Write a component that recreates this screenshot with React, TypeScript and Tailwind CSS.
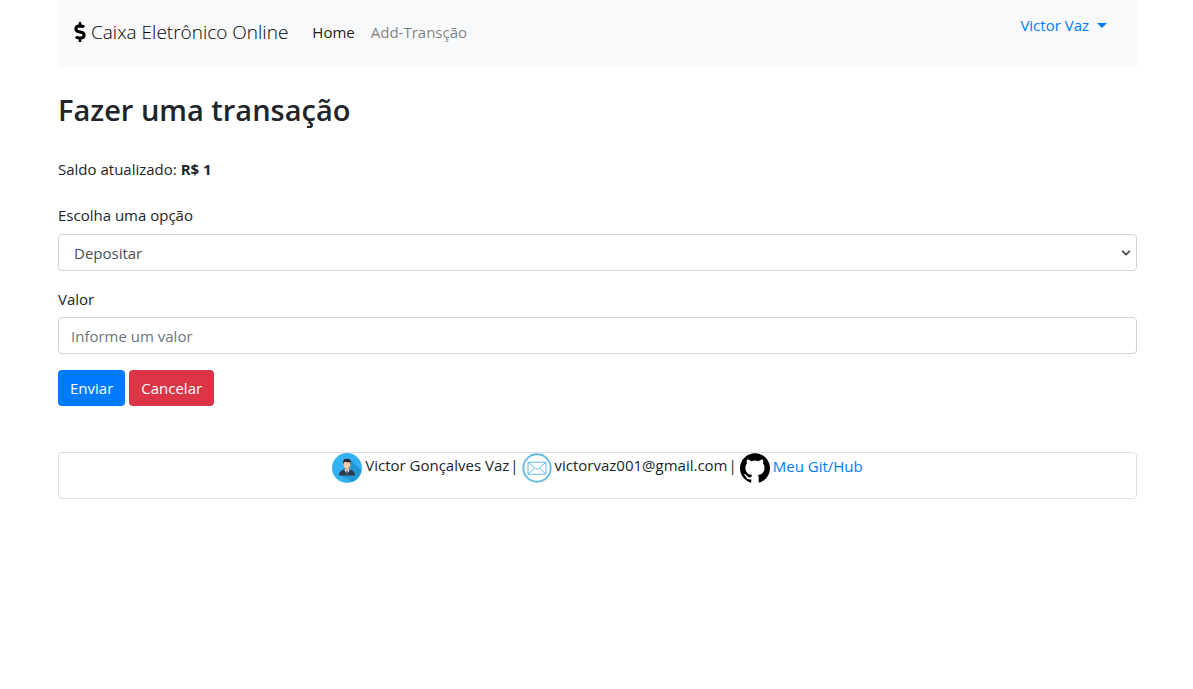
import { FaChevronDown, FaDollarSign } from "react-icons/fa";
import { SiGithub } from "react-icons/si";

function UserIcon() {
  return (
    <svg viewBox="0 0 30 30" className="size-[30px] shrink-0" aria-hidden="true">
      <circle cx="15" cy="15" r="15" fill="#34b2f4" />
      <path d="M18 6 L29.2 17.2 A15 15 0 0 1 20 29.1 L8 22 Z" fill="#2497d3" />
      <path d="M7 22.5 C7 19 9 17.5 12.5 16.3 L17.5 16.3 C21 17.5 23 19 23 22.5 Z" fill="#2d3a4c" />
      <path d="M12.3 16.2 L15 22.3 L17.7 16.2 Z" fill="#f3f3f3" />
      <path d="M14.4 17.4 H15.6 L16 21 L15 22.4 L14 21 Z" fill="#31465c" />
      <path d="M13.2 13 H16.8 V16.3 L15 17.8 L13.2 16.3 Z" fill="#e8b48c" />
      <ellipse cx="15" cy="11.2" rx="3.3" ry="4.2" fill="#f6cba5" />
      <path d="M11.3 11 C10.6 7.5 12 5.7 15 5.7 C18 5.7 19.4 7.5 18.7 11 L18 9.3 C16 9.4 14.3 9 13.2 8.7 L12 9.5 Z" fill="#29292f" />
    </svg>
  );
}

function MailIcon() {
  return (
    <svg viewBox="0 0 30 30" className="size-[30px] shrink-0" fill="none" stroke="#67bbe5" aria-hidden="true">
      <circle cx="15" cy="15" r="13.7" strokeWidth="1.9" />
      <rect x="6" y="9.2" width="18" height="12" rx="0.6" strokeWidth="1.1" />
      <path d="M6.3 9.5 L13.4 15.6 Q15 16.8 16.6 15.6 L23.7 9.5 M6.4 20.9 L12.6 15 M23.6 20.9 L17.4 15" strokeWidth="1" />
    </svg>
  );
}

export default function App() {
  return (
    <div className="min-h-screen bg-white pr-14 pl-[58px] font-['Open_Sans','Noto_Sans',sans-serif] text-[15px] leading-6 text-[#212529]">
      <nav className="flex h-[67px] items-start justify-between bg-[#f8f9fa] px-4">
        <div className="flex h-16 items-center">
          <a href="#" className="mr-6 flex items-center gap-[5px] text-[19px] font-light text-black">
            <FaDollarSign className="h-5 w-3" aria-hidden="true" />
            Caixa Eletrônico Online
          </a>
          <a href="#" className="mr-4 text-black/90">Home</a>
          <a href="#" className="text-black/50">Add-Transção</a>
        </div>
        <button type="button" className="mt-[13px] mr-[14px] flex items-center gap-2 text-[#007bff]">
          Victor Vaz
          <span className="border-x-[5px] border-t-[5px] border-x-transparent border-t-[#007bff]" />
        </button>
      </nav>

      <main>
        <h1 className="mt-6 text-[29px] leading-[38px] font-semibold">Fazer uma transação</h1>
        <p className="mt-7 mb-[22px]">
          Saldo atualizado: <strong>R$ 1</strong>
        </p>
        <form>
          <label htmlFor="opcao" className="mb-[7px] block">Escolha uma opção</label>
          <div className="grid items-center">
            <select
              id="opcao"
              className="col-start-1 row-start-1 h-[37px] w-full appearance-none rounded border border-[#ced4da] bg-white pr-8 pl-[15px] text-[#495057]"
            >
              <option>Depositar</option>
              <option>Sacar</option>
            </select>
            <FaChevronDown className="pointer-events-none col-start-1 row-start-1 mr-[6px] size-2.5 justify-self-end text-[#3b4045]" aria-hidden="true" />
          </div>
          <label htmlFor="valor" className="mt-4 mb-[6px] block">Valor</label>
          <input
            id="valor"
            type="text"
            placeholder="Informe um valor"
            className="block h-[37px] w-full rounded border border-[#ced4da] px-3 text-[#495057] placeholder:text-[#6c757d]"
          />
          <div className="mt-4 flex gap-1">
            <button type="submit" className="h-9 rounded bg-[#007bff] px-3 text-white">Enviar</button>
            <button type="button" className="h-9 rounded bg-[#dc3545] px-3 text-white">Cancelar</button>
          </div>
        </form>
      </main>

      <footer className="mt-[46px] flex h-[47px] items-start justify-center gap-[3px] rounded border border-[#dfdfdf]">
        <UserIcon />
        <span className="flex gap-px"><span>Victor Gonçalves Vaz</span><span>|</span></span>
        <MailIcon />
        <span className="flex gap-px"><span>victorvaz001@gmail.com</span><span>|</span></span>
        <SiGithub className="size-[30px] shrink-0 text-black" aria-hidden="true" />
        <a href="#" className="mt-px text-[#007bff]">Meu Git/Hub</a>
      </footer>
    </div>
  );
}
